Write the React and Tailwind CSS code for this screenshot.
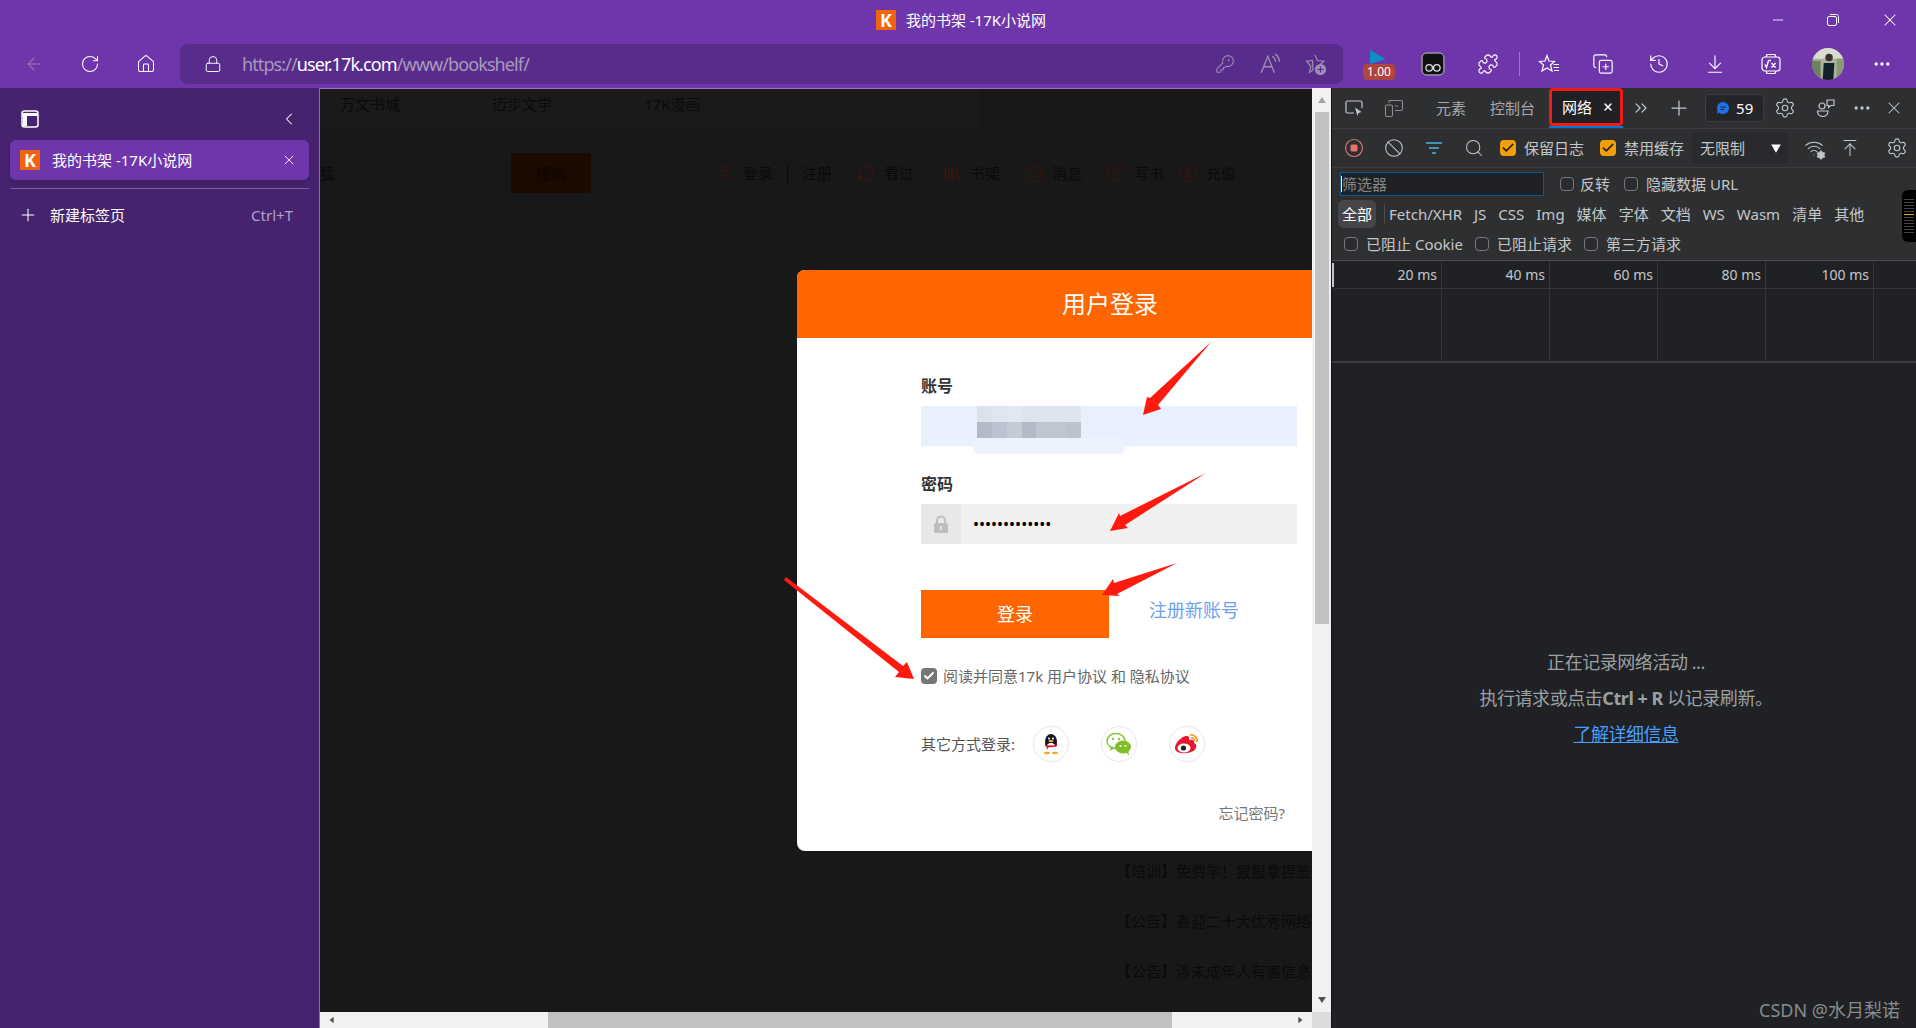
import React from "react";
import {
  ArrowLeft,
  RotateCw,
  Home,
  Lock,
  KeyRound,
  Puzzle,
  CopyPlus,
  History,
  ArrowDownToLine,
  ArrowUpToLine,
  Ellipsis,
  Minus,
  X,
  Plus,
  ChevronLeft,
  ChevronsRight,
  Settings,
  Ban,
  Search,
  Wifi,
  Check,
  User,
  RefreshCw,
  MailOpen,
  SquarePen,
  CircleDollarSign,
  Library,
} from "lucide-react";

const Logo = () => (
  <div className="w-5 h-5 bg-[#f2630f] flex items-center justify-center text-white font-bold text-lg leading-none">
    K
  </div>
);

const Tri = ({ points, className }) => (
  <svg viewBox="0 0 10 10" className={className}>
    <polygon points={points} fill="currentColor" />
  </svg>
);

const ReadAloud = () => (
  <svg viewBox="0 0 20 20" className="w-5.5 h-5.5" fill="none" stroke="currentColor" strokeWidth="1.2">
    <path d="M2 18 L8 3 L14 18 M4.5 12.5 H11.5" />
    <path d="M12 3 C14 4 15 6 15 8 M14.5 1 C17 2.5 18.5 5 18.5 8" />
  </svg>
);

const StarAdd = () => (
  <svg viewBox="0 0 22 22" className="w-5.5 h-5.5" fill="none" stroke="currentColor" strokeWidth="1.2">
    <path d="M10 2 L12.5 7.5 L19 8.2 L14.5 12 M8 17 L4.5 19.5 L5.8 13 L1.5 8.2 L7.5 7.5 Z" />
    <circle cx="15.5" cy="16.5" r="5" fill="currentColor" />
    <path d="M15.5 13.5 V19.5 M12.5 16.5 H18.5" stroke="#582c8c" />
  </svg>
);

const FavList = () => (
  <svg viewBox="0 0 22 22" className="w-5.5 h-5.5" fill="none" stroke="currentColor" strokeWidth="1.2">
    <path d="M9 2.5 L11 8 L16.5 8.5 L12.5 12 L14 18 L9 15 L4 18 L5.5 12 L1.5 8.5 L7 8 Z" />
    <path d="M15.5 11.5 H21 M15.5 14.5 H21 M16 17.5 H21" />
  </svg>
);

const MathIcon = () => (
  <svg viewBox="0 0 22 22" className="w-5.5 h-5.5" fill="none" stroke="currentColor" strokeWidth="1.2">
    <rect x="2" y="4" width="18" height="14" rx="3" />
    <path d="M6 4 L7 1.5 H15 L16 4 M6 18 L7 20.5 H15 L16 18" />
    <path d="M5 11.5 L6.5 14.5 L8.5 7.5 H11 M11.5 10 L15.5 14.5 M15.5 10 L11.5 14.5" strokeWidth="1.4" />
  </svg>
);

const Avatar = () => (
  <svg viewBox="0 0 30 30" className="w-8 h-8 rounded-full">
    <rect width="30" height="30" fill="#aab39c" />
    <rect y="0" width="30" height="10" fill="#d9dccf" />
    <rect x="0" y="12" width="8" height="18" fill="#6f7f62" />
    <rect x="23" y="10" width="7" height="20" fill="#8a9a78" />
    <circle cx="16" cy="9" r="3.5" fill="#3a3030" />
    <path d="M10 30 L11 14 L21 14 L20 30 Z" fill="#14202c" />
  </svg>
);

const RestoreIcon = () => (
  <svg viewBox="0 0 14 14" className="w-3.5 h-3.5" fill="none" stroke="currentColor" strokeWidth="1">
    <rect x="1.5" y="3.5" width="9" height="9" rx="1.5" />
    <path d="M4 1.5 H10.5 C11.7 1.5 12.5 2.3 12.5 3.5 V10" />
  </svg>
);

const InspectIcon = () => (
  <svg viewBox="0 0 20 20" className="w-5 h-5" fill="none" stroke="currentColor" strokeWidth="1.2">
    <path d="M10 15 H3.5 C2.5 15 2 14.4 2 13.5 V4.5 C2 3.6 2.5 3 3.5 3 H16.5 C17.5 3 18 3.6 18 4.5 V10" />
    <path d="M11 9.5 L17.5 14 L14.5 15 L13.5 18 Z" fill="currentColor" stroke="none" />
  </svg>
);

const DeviceIcon = () => (
  <svg viewBox="0 0 20 20" className="w-5 h-5" fill="none" stroke="currentColor" strokeWidth="1.1">
    <rect x="1.5" y="7" width="7" height="11.5" rx="1.5" />
    <path d="M5 2.5 H17 C18 2.5 18.5 3 18.5 4 V11 C18.5 12 18 12.5 17 12.5 H11 M5 2.5 V5 M11 8 H14" />
  </svg>
);

const FeedbackIcon = () => (
  <svg viewBox="0 0 20 20" className="w-5 h-5" fill="none" stroke="currentColor" strokeWidth="1.2">
    <circle cx="6" cy="8" r="3" />
    <path d="M1.5 13 H12 C12 16.5 9.5 18.5 6.8 18.5 C4 18.5 1.5 16.5 1.5 13 Z" />
    <path d="M11 2 H18 V7.5 H14.5 L12.5 9.5 V7.5 H11 Z" />
  </svg>
);

const FilterLines = () => (
  <svg viewBox="0 0 20 20" className="w-5 h-5" fill="none" stroke="#4fb3e8" strokeWidth="1.3">
    <path d="M2 5 H18 M5 10 H15 M8 15 H12" />
  </svg>
);

const VTabsIcon = () => (
  <svg viewBox="0 0 20 20" className="w-5 h-5" fill="none" stroke="white" strokeWidth="1.5">
    <rect x="2" y="2" width="16" height="16" rx="2.5" />
    <path d="M2 5.5 H18" strokeWidth="3" />
    <rect x="3" y="6" width="4" height="11" fill="white" stroke="none" />
  </svg>
);

const MonkeyIcon = () => (
  <svg viewBox="0 0 22 22" className="w-6 h-6">
    <rect x="1" y="1" width="20" height="20" rx="4" fill="#111" stroke="#ddd" strokeWidth="0.8" />
    <circle cx="7.5" cy="14.5" r="3" fill="none" stroke="#ddd" strokeWidth="1.2" />
    <circle cx="14.5" cy="14.5" r="3" fill="none" stroke="#ddd" strokeWidth="1.2" />
  </svg>
);

const FormLock = () => (
  <svg viewBox="0 0 20 20" className="w-5 h-5">
    <path d="M6 9 V6.5 A4 4 0 0 1 14 6.5 V9" fill="none" stroke="#bdbdbd" strokeWidth="2" />
    <rect x="3" y="9" width="14" height="10" rx="1.5" fill="#bdbdbd" />
    <rect x="9.2" y="12" width="1.6" height="4" fill="#eeeeee" />
  </svg>
);

const QQIcon = () => (
  <svg viewBox="0 0 24 24" className="w-6 h-6">
    <ellipse cx="12" cy="10" rx="6" ry="8" fill="#111827" />
    <ellipse cx="12" cy="16" rx="5" ry="5" fill="#fff" />
    <path d="M6 12 C9 14 15 14 18 12 L18 14 C15 15.5 9 15.5 6 14 Z" fill="#e60012" />
    <path d="M8 14 L7.5 18 L10 15 Z" fill="#e60012" />
    <ellipse cx="12" cy="9" rx="2.5" ry="1.2" fill="#f5a623" />
    <circle cx="10" cy="6.5" r="1" fill="#fff" />
    <circle cx="14" cy="6.5" r="1" fill="#fff" />
    <ellipse cx="8" cy="21" rx="3" ry="1.3" fill="#f5a623" />
    <ellipse cx="16" cy="21" rx="3" ry="1.3" fill="#f5a623" />
  </svg>
);

const WechatIcon = () => (
  <svg viewBox="0 0 28 28" className="w-7 h-7">
    <ellipse cx="11" cy="11" rx="9" ry="7.5" fill="#fff" stroke="#8cc63f" strokeWidth="1.5" />
    <path d="M6 16 L5 21 L10 18 Z" fill="#8cc63f" />
    <circle cx="8" cy="9" r="1.2" fill="#8cc63f" />
    <circle cx="14" cy="9" r="1.2" fill="#8cc63f" />
    <ellipse cx="18" cy="17" rx="8" ry="6.5" fill="#7fbe26" />
    <path d="M21 22 L24 26 L23 20 Z" fill="#7fbe26" />
    <circle cx="15.5" cy="16" r="1.1" fill="#fff" />
    <circle cx="20.5" cy="16" r="1.1" fill="#fff" />
  </svg>
);

const WeiboIcon = () => (
  <svg viewBox="0 0 28 28" className="w-7 h-7">
    <path d="M2 18 C2 13 8 7 13 6 C16 5.5 16.5 8 16 10 C19 9 22 10 21 13 C24 14 24 18 21 20.5 C17 24 2 25 2 18 Z" fill="#e6162d" />
    <ellipse cx="11" cy="18" rx="6.5" ry="4.5" fill="#fff" />
    <circle cx="10.5" cy="18" r="2.6" fill="#222" />
    <path d="M17 5 C21 4 25 8 24 12 M18 8 C20 7.5 22 9.5 21.5 11.5" fill="none" stroke="#f59a23" strokeWidth="1.6" />
  </svg>
);

const Arrows = () => (
  <svg viewBox="0 0 1916 1028" className="absolute inset-0 w-full h-full pointer-events-none">
    <g fill="#ff1a0f">
      <polygon points="1211,342 1158,405 1161,409 1143,415 1147,397 1150,398" />
      <polygon points="1206,473 1125,525 1128,528 1110,531 1119,513 1120,516" />
      <polygon points="1177,563 1117,594 1120,596 1102,595 1113,579 1114,583" />
      <polygon points="786,577 784,580 899,672 895,677 914,679 907,662 903,666" />
    </g>
  </svg>
);

const EmptyBox = () => (
  <span className="block w-3.5 h-3.5 rounded-sm border border-[#77797c] bg-[#2a2b2e] shrink-0" />
);

const OrangeBox = () => (
  <span className="w-4 h-4 rounded-sm bg-[#f29f0a] flex items-center justify-center shrink-0">
    <Check className="w-3.5 h-3.5 text-[#202124]" strokeWidth={3} />
  </span>
);

const MOSAIC_TOP = ["bg-[#dbe2ee]", "bg-[#e0e6f1]", "bg-[#e2e8f3]", "bg-[#dde4f0]", "bg-[#dfe5f0]", "bg-[#dfe5f0]", "bg-[#dfe5f0]"];
const MOSAIC_LOW = ["bg-[#b4bac8]", "bg-[#bcc2d0]", "bg-[#c4cad6]", "bg-[#b4bac8]", "bg-[#bfc5d1]", "bg-[#bfc5d1]", "bg-[#bcc2ce]"];

const PageNav = () => (
  <div className="flex items-center ml-31 gap-6 text-[#0a0a0a]">
    <div className="flex items-center gap-2">
      <User className="w-5 h-5 text-[#3a1510]" strokeWidth={1.25} />
      <span>登录</span>
      <span className="w-px h-5 bg-[#0a0a0a] mx-1.5" />
      <span>注册</span>
    </div>
    <div className="flex items-center gap-2">
      <RefreshCw className="w-5 h-5 text-[#3a1510]" strokeWidth={1.5} />
      <span>看过</span>
    </div>
    <div className="flex items-center gap-2 ml-1">
      <Library className="w-5 h-5 text-[#3a1510]" />
      <span>书架</span>
    </div>
    <div className="flex items-center gap-2">
      <MailOpen className="w-5 h-5 text-[#3a1510]" strokeWidth={1.25} />
      <span>消息</span>
    </div>
    <div className="flex items-center gap-2">
      <SquarePen className="w-5 h-5 text-[#3a1510]" strokeWidth={1.25} />
      <span>写书</span>
    </div>
    <div className="flex items-center gap-2 -ml-2.5">
      <CircleDollarSign className="w-5 h-5 text-[#3a1510]" strokeWidth={1.25} />
      <span>充值</span>
    </div>
  </div>
);

const LoginDialog = () => (
  <div className="absolute left-[477px] top-[181px] w-[626px] h-[581px] bg-white rounded-lg overflow-hidden">
    <div className="h-17 bg-[#ff6600] flex items-center justify-center text-white text-2xl">用户登录</div>
    <div className="pl-31 w-[500px]">
      <div className="mt-9 h-6 leading-6 text-base font-bold text-[#333333]">账号</div>
      <div className="relative mt-2 h-10 bg-[#e8f0fe]">
        <div className="absolute left-14 top-0 flex flex-col w-26">
          <div className="h-4 flex">
            {MOSAIC_TOP.map((c, i) => (
              <span key={i} className={"flex-1 " + c} />
            ))}
          </div>
          <div className="h-4 flex">
            {MOSAIC_LOW.map((c, i) => (
              <span key={i} className={"flex-1 " + c} />
            ))}
          </div>
        </div>
        <div className="absolute left-13 top-8 w-38 h-4 bg-[#edf3fd] rounded-b-md" />
      </div>
      <div className="mt-6.5 h-6 leading-6 text-base font-bold text-[#333333]">密码</div>
      <div className="mt-2 h-10 bg-[#f0f0f0] flex items-center">
        <div className="w-10 h-full bg-[#e8e8e8] flex items-center justify-center">
          <FormLock />
        </div>
        <span className="ml-3 text-black text-base">•••••••••••••</span>
      </div>
      <div className="mt-11.5 flex items-center gap-10">
        <div className="w-47 h-12 bg-[#ff6600] text-white text-lg flex items-center justify-center">登录</div>
        <span className="text-lg text-[#6f9ff0] pb-2">注册新账号</span>
      </div>
      <div className="mt-7 h-5 flex items-center gap-1.5 text-[#666666]">
        <span className="w-4 h-4 rounded-sm bg-[#767676] flex items-center justify-center">
          <Check className="w-3 h-3 text-white" strokeWidth={4} />
        </span>
        <span>阅读并同意17k 用户协议 和 隐私协议</span>
      </div>
      <div className="mt-10 flex items-center text-[#555555]">
        <span className="w-27">其它方式登录:</span>
        <div className="flex items-center gap-8 ml-1">
          <span className="w-9 h-9 rounded-full border border-gray-200 flex items-center justify-center"><QQIcon /></span>
          <span className="w-9 h-9 rounded-full border border-gray-200 flex items-center justify-center"><WechatIcon /></span>
          <span className="w-9 h-9 rounded-full border border-gray-200 flex items-center justify-center"><WeiboIcon /></span>
        </div>
      </div>
      <div className="mt-10 pr-3 text-[#777777] text-right">忘记密码?</div>
    </div>
  </div>
);

const Page = () => (
  <div className="flex-1 relative overflow-hidden flex flex-col bg-[#181818] border-t border-[#9a72c9]">
    <div className="w-165 h-10 pb-2 flex items-center bg-[#1a1a1a] border-b border-[#151515] text-[#0a0a0a]">
      <span className="w-38 pl-5">万文书城</span>
      <span className="w-38 pl-5">迈步文学</span>
      <span className="w-38 pl-5">17K漫画</span>
    </div>
    <div className="mt-6 flex items-center text-[#0a0a0a]">
      <span>猛</span>
      <div className="ml-44 w-20 h-10 rounded-sm bg-[#1a0a00] flex items-center justify-center text-[#0d0500]">搜索</div>
      <PageNav />
    </div>
    <div className="mt-auto ml-auto mb-4 w-49 flex flex-col gap-0.5 text-[#0a0a0a] whitespace-nowrap overflow-hidden">
      <div className="h-12 flex items-center border-b border-[#151515]">【培训】免费学！狠狠拿捏签约技巧</div>
      <div className="h-12 flex items-center border-b border-[#151515]">【公告】喜迎二十大优秀网络文学</div>
      <div className="h-12 flex items-center border-b border-[#151515]">【公告】涉未成年人有害信息举报</div>
    </div>
    <div className="h-4 shrink-0 bg-[#f1f1f1] flex items-center text-[#505050]">
      <Tri points="7,1 2,5 7,9" className="w-2 h-2.5 ml-2" />
      <div className="ml-53 w-156 h-full bg-[#c1c1c1]" />
      <Tri points="3,1 8,5 3,9" className="w-2 h-2.5 ml-auto mr-2" />
    </div>
    <LoginDialog />
  </div>
);

const VScroll = () => (
  <div className="w-5 shrink-0 bg-[#f1f1f1] flex flex-col items-center border-r border-[#111111]">
    <div className="h-6 flex items-center text-[#a3a3a3]">
      <Tri points="5,2 1,8 9,8" className="w-2.5 h-2.5" />
    </div>
    <div className="w-3.5 h-128 bg-[#c1c1c1]" />
    <div className="mt-auto h-6 flex items-center text-[#505050]">
      <Tri points="1,2 9,2 5,8" className="w-2.5 h-2.5" />
    </div>
    <div className="h-4 w-full bg-[#dcdcdc]" />
  </div>
);

const TYPES = ["Fetch/XHR", "JS", "CSS", "Img", "媒体", "字体", "文档", "WS", "Wasm", "清单", "其他"];
const TICKS = ["20 ms", "40 ms", "60 ms", "80 ms", "100 ms"];
const MAP_LINES = [0, 1, 2, 3, 4, 5, 6, 7, 8, 9, 10, 11];

const DevTools = () => (
  <div className="w-[584px] shrink-0 relative flex flex-col bg-[#202124] text-[#c4c7ca]">
    <div className="h-10 flex items-center pl-3 bg-[#2e2f31]">
      <InspectIcon />
      <span className="ml-5 text-[#8b8d90]"><DeviceIcon /></span>
      <span className="ml-8 text-[#a6a8ab]">元素</span>
      <span className="ml-6 text-[#a6a8ab]">控制台</span>
      <div className="ml-3.5 h-full border-b-2 border-[#0078d4]">
        <div className="h-full flex items-center pl-2.5 pr-1.5 border-3 border-[#ef1c13] rounded-sm bg-[#202124]">
          <span className="text-white">网络</span>
          <X className="ml-2.5 w-3 h-3 text-white" strokeWidth={3} />
        </div>
      </div>
      <ChevronsRight className="ml-2 w-5 h-5" strokeWidth={1.5} />
      <Plus className="ml-4 w-6 h-6" strokeWidth={1.25} />
      <div className="ml-3.5 h-7 px-2.5 flex items-center gap-1.5 rounded-sm border border-[#3c3d40] bg-[#242528] text-white">
        <svg viewBox="0 0 14 14" className="w-3.5 h-3.5">
          <path d="M7 1 A6 6 0 1 1 3 11.5 L1 13 L1.6 9.5 A6 6 0 0 1 7 1 Z" fill="#1a73e8" />
          <path d="M4.5 6 H9.5 M4.5 8.5 H8" stroke="#202124" strokeWidth="1" />
        </svg>
        <span>59</span>
      </div>
      <Settings className="ml-2.5 w-5.5 h-5.5" strokeWidth={1.25} />
      <span className="ml-5"><FeedbackIcon /></span>
      <Ellipsis className="ml-4 w-5 h-5" />
      <X className="ml-3 w-5 h-5" strokeWidth={1.25} />
    </div>
    <div className="h-10 flex items-center pl-3 bg-[#2e2f31] border-y border-[#3c3d40]">
      <svg viewBox="0 0 20 20" className="w-5 h-5">
        <circle cx="10" cy="10" r="8.5" fill="none" stroke="#d9746c" strokeWidth="1.2" />
        <rect x="6.5" y="6.5" width="7" height="7" rx="1.5" fill="#e8726a" />
      </svg>
      <Ban className="ml-5 w-5 h-5" strokeWidth={1.25} />
      <span className="ml-5"><FilterLines /></span>
      <Search className="ml-5 w-5 h-5" strokeWidth={1.25} />
      <span className="ml-4"><OrangeBox /></span>
      <span className="ml-2">保留日志</span>
      <span className="ml-4"><OrangeBox /></span>
      <span className="ml-2">禁用缓存</span>
      <div className="ml-2 w-24 h-8 rounded-sm bg-[#292a2d] flex items-center pl-2 pr-1.5 justify-between">
        <span>无限制</span>
        <Tri points="1,2 9,2 5,9" className="w-3 h-3 text-white" />
      </div>
      <div className="ml-4 w-5 h-5 relative">
        <Wifi className="w-5 h-5" strokeWidth={1.25} />
        <Settings className="absolute -right-0.5 -bottom-0.5 w-2.5 h-2.5" fill="#c4c7ca" />
      </div>
      <ArrowUpToLine className="ml-4 w-5 h-5" strokeWidth={1.25} />
      <Settings className="ml-6.5 w-5.5 h-5.5" strokeWidth={1.25} />
    </div>
    <div className="bg-[#2e2f31] border-b border-[#4a4b4e] flex flex-col pb-0.5">
      <div className="h-8 flex items-center pl-2">
        <div className="w-51 h-6 border border-[#0e5a8a] bg-[#202124] flex items-center text-[#85878a]">
          <span className="w-px h-4 bg-white" />
          <span>筛选器</span>
        </div>
        <span className="ml-4"><EmptyBox /></span>
        <span className="ml-1.5">反转</span>
        <span className="ml-3.5"><EmptyBox /></span>
        <span className="ml-2">隐藏数据 URL</span>
      </div>
      <div className="h-7 flex items-center pl-1.5 gap-3">
        <span className="px-1 h-7 flex items-center rounded-md bg-[#454649] text-white">全部</span>
        <span className="w-px h-5 bg-[#4a4b4e] -ml-1 -mr-2" />
        {TYPES.map((t) => (
          <span key={t}>{t}</span>
        ))}
      </div>
      <div className="h-7 mt-0.5 flex items-center pl-3">
        <EmptyBox />
        <span className="ml-2">已阻止 Cookie</span>
        <span className="ml-3"><EmptyBox /></span>
        <span className="ml-2">已阻止请求</span>
        <span className="ml-3"><EmptyBox /></span>
        <span className="ml-2">第三方请求</span>
      </div>
    </div>
    <div className="relative pl-0.5 border-b-2 border-[#3c3d40] overflow-hidden">
      <span className="absolute left-0 top-0.5 w-0.5 h-6 bg-[#c4c7ca]" />
      <div className="h-7 flex border-b border-[#35363a]">
        {TICKS.map((t) => (
          <div key={t} className="w-27 shrink-0 flex items-center justify-end pr-1 border-r border-[#35363a] text-sm">{t}</div>
        ))}
      </div>
      <div className="h-18 flex">
        {TICKS.map((t) => (
          <div key={t} className="w-27 shrink-0 border-r border-[#35363a]" />
        ))}
      </div>
    </div>
    <div className="flex-1 pl-1 pt-1 flex flex-col items-center justify-center gap-2 text-lg tracking-tight text-[#9aa0a6]">
      <span>正在记录网络活动 ...</span>
      <span>执行请求或点击<b>Ctrl + R</b> 以记录刷新。</span>
      <span className="text-[#4a9eff] underline">了解详细信息</span>
    </div>
    <span className="absolute right-4 bottom-1 text-lg text-[#8a8b8d]">CSDN @水月梨诺</span>
    <div className="absolute right-0 top-[102px] w-3.5 h-13 rounded-l-md bg-black flex flex-col justify-center gap-0.5 px-0.5">
      {MAP_LINES.map((n) => (
        <span key={n} className={n === 5 ? "h-px bg-[#f29f0a]" : "h-px bg-[#444444]"} />
      ))}
    </div>
  </div>
);

const Sidebar = () => (
  <div className="w-80 shrink-0 bg-[#45236f] border-r border-[#8a6bb0] flex flex-col">
    <div className="h-13 flex items-center justify-between pl-5 pr-5 pt-2.5">
      <VTabsIcon />
      <ChevronLeft className="w-5 h-5 text-white" strokeWidth={1.25} />
    </div>
    <div className="mx-2.5 h-10 rounded-md bg-[#6f36ab] shadow-md flex items-center px-2.5 text-white">
      <Logo />
      <span className="ml-3">我的书架 -17K小说网</span>
      <X className="ml-auto mr-0.5 w-4 h-4" strokeWidth={1.25} />
    </div>
    <div className="mx-2.5 mt-2 h-px bg-[#7f6199]" />
    <div className="mt-1.5 mx-2.5 h-10 flex items-center pl-2 pr-4 text-white">
      <Plus className="w-5 h-5" strokeWidth={1.25} />
      <span className="ml-3">新建标签页</span>
      <span className="ml-auto text-[#b3a3c7]">Ctrl+T</span>
    </div>
  </div>
);

const Toolbar = () => (
  <div className="h-11 flex items-start text-white bg-[#6f36ab]">
    <ArrowLeft className="ml-6 mt-2.5 w-5 h-5 text-[#9a84b6]" strokeWidth={1.25} />
    <RotateCw className="ml-9 mt-2.5 w-5 h-5" strokeWidth={1.25} />
    <Home className="ml-9 mt-2.5 w-5 h-5" strokeWidth={1.25} />
    <div className="ml-6 w-[1163px] h-10 rounded-lg bg-[#582c8c] flex items-center pl-6 pr-4">
      <Lock className="w-4.5 h-4.5" strokeWidth={1.25} />
      <span className="ml-5 text-lg tracking-tighter text-[#a99ab9]">
        https://<span className="text-white">user.17k.com</span>/www/bookshelf/
      </span>
      <div className="ml-auto flex items-center gap-6 text-[#9d8fb0]">
        <KeyRound className="w-5 h-5" strokeWidth={1.25} />
        <ReadAloud />
        <StarAdd />
      </div>
    </div>
    <div className="flex-1 h-10 flex items-center pl-5">
      <div className="relative w-8 h-8">
        <svg viewBox="0 0 20 20" className="absolute left-1 top-0 w-5 h-5">
          <polygon points="3,2 19,11 3,16" fill="#0e8fc4" />
        </svg>
        <span className="absolute left-0 bottom-0 w-8 h-4 rounded-sm bg-[#b0443f] flex items-center justify-center text-xs">1.00</span>
      </div>
      <span className="ml-6.5"><MonkeyIcon /></span>
      <Puzzle className="ml-8 w-5.5 h-5.5" strokeWidth={1.25} />
      <span className="ml-5 w-px h-6 bg-[#9a78c4]" />
      <span className="ml-4.5"><FavList /></span>
      <CopyPlus className="ml-8 w-5.5 h-5.5" strokeWidth={1.25} />
      <History className="ml-8.5 w-5.5 h-5.5" strokeWidth={1.25} />
      <ArrowDownToLine className="ml-8.5 w-5.5 h-5.5" strokeWidth={1.25} />
      <span className="ml-8.5"><MathIcon /></span>
      <span className="ml-7.5"><Avatar /></span>
      <Ellipsis className="ml-7 w-5 h-5" />
    </div>
  </div>
);

export default function App() {
  return (
    <div className="relative w-screen h-screen overflow-hidden flex flex-col text-[15px] font-['Noto_Sans','Noto_Sans_CJK_SC',sans-serif] bg-[#6f36ab]">
      <div className="h-11 pb-1 grid grid-cols-3 items-center text-white">
        <div />
        <div className="pl-1.5 flex items-center justify-center gap-2.5">
          <Logo />
          <span>我的书架 -17K小说网</span>
        </div>
        <div className="flex items-center justify-end gap-10 pr-4">
          <Minus className="w-4 h-4" strokeWidth={1.25} />
          <RestoreIcon />
          <X className="w-5 h-5" strokeWidth={1.25} />
        </div>
      </div>
      <Toolbar />
      <div className="flex-1 flex min-h-0">
        <Sidebar />
        <Page />
        <VScroll />
        <DevTools />
      </div>
      <Arrows />
    </div>
  );
}
